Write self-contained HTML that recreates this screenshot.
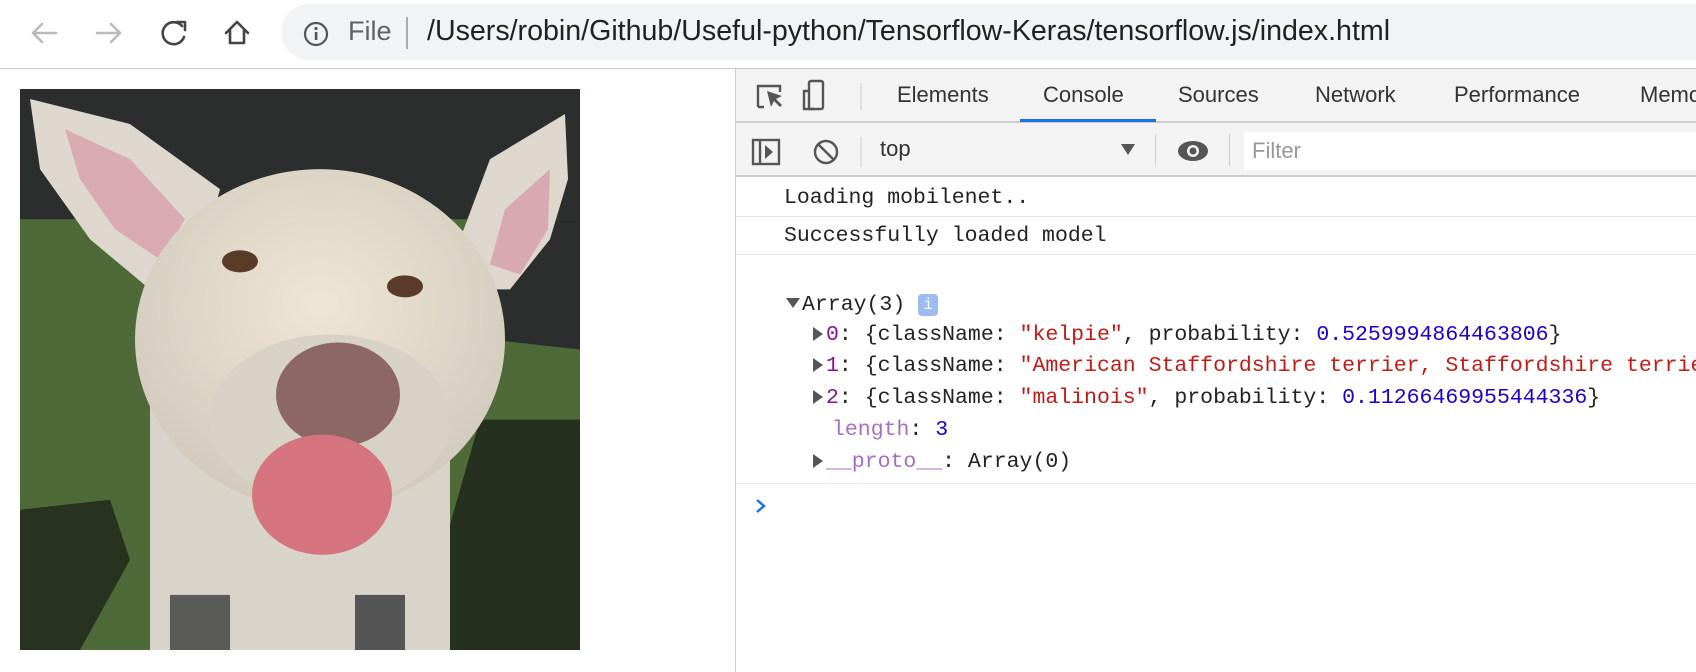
<!DOCTYPE html>
<html><head><meta charset="utf-8">
<style>
*{margin:0;padding:0;box-sizing:border-box}
html,body{width:1696px;height:672px;overflow:hidden}
body{background:#fff;font-family:"Liberation Sans",sans-serif;position:relative}
#wrap{position:absolute;left:0;top:0;width:1696px;height:672px;overflow:hidden}
.abs{position:absolute}
.tb{left:0;top:0;width:1696px;height:69px;background:#fff;border-bottom:1px solid #c8c8c8}
.pill{left:281px;top:4px;width:1415px;height:56px;border-radius:28px 0 0 28px;background:#f1f3f4}
.url{left:427px;top:15px;font-size:28.6px;color:#202124;white-space:nowrap}
.dt{left:735px;top:69px;width:961px;height:603px;border-left:1px solid #ccc;background:#fff}
.bar1{left:736px;top:69px;width:960px;height:54px;background:#f3f3f3;border-bottom:2px solid #ccc}
.bar2{left:736px;top:123px;width:960px;height:54px;background:#f3f3f3;border-bottom:2px solid #ccc}
.tab{top:82px;font-size:22px;color:#333}
.sep{width:1px;background:#ccc}
.mono{font-family:"Liberation Mono",monospace;font-size:21.5px;color:#222;white-space:nowrap;line-height:32px}
.k{color:#881391}.s{color:#c41a16}.n{color:#1c00cf}.l{color:#a86ec0}
.tri{display:inline-block;width:0;height:0;border-top:7px solid transparent;border-bottom:7px solid transparent;border-left:10px solid #555;margin-right:3px;vertical-align:-1px}
.hr{height:1px;background:#e6e6e6;left:736px;width:960px}
</style></head><body><div id="wrap">
<div class="abs tb"></div>
<svg class="abs" style="left:0;top:0" width="280" height="66">
<g fill="none" stroke-width="2.6" stroke-linecap="round" stroke-linejoin="round">
<path d="M33 33H56M33 33l9-9M33 33l9 9" stroke="#bbb"/>
<path d="M97 33H120M120 33l-9-9M120 33l-9 9" stroke="#bbb"/>
<path d="M182 26a11 11 0 1 0 2 11" stroke="#444"/>
<path d="M177 22h8v8" stroke="#444"/>
<path d="M226 33l11-11 11 11M230 30v13h14V30" stroke="#444"/>
</g></svg>
<div class="abs pill"></div>
<svg class="abs" style="left:302px;top:20px" width="28" height="28"><circle cx="14" cy="14" r="11" fill="none" stroke="#555" stroke-width="2.2"/><rect x="12.8" y="12" width="2.6" height="8" fill="#555"/><circle cx="14" cy="8.5" r="1.6" fill="#555"/></svg>
<div class="abs" style="left:348px;top:16px;font-size:27px;color:#5f6368">File</div>
<div class="abs" style="left:406px;top:17px;width:2px;height:32px;background:#aaa"></div>
<div class="abs url">/Users/robin/Github/Useful-python/Tensorflow-Keras/tensorflow.js/index.html</div>

<svg class="abs" style="left:20px;top:89px" width="560" height="561" viewBox="0 0 560 560" preserveAspectRatio="none">
<defs><radialGradient id="hg" cx="0.5" cy="0.4" r="0.6"><stop offset="0" stop-color="#eee5d5"/><stop offset="1" stop-color="#d2cbbd"/></radialGradient></defs>
<rect width="560" height="560" fill="#4d6a38"/>
<rect width="560" height="130" fill="#2b2e2c"/>
<path d="M0 130H560V260L470 250 460 130Z" fill="#2b2e2c"/>
<path d="M0 420 90 410 110 470 60 560H0Z" fill="#28331f"/>
<path d="M460 330 560 330 560 560 400 560 420 470Z" fill="#26301f"/>
<path d="M190 450 260 440 260 560 160 560Z" fill="#2a3322"/>
<path d="M10 10 110 35 200 100 180 180 130 200 70 150 20 80Z" fill="#ddd7cd"/>
<path d="M45 40 110 70 165 130 140 170 95 140 60 90Z" fill="#d9aab2"/>
<path d="M545 25 470 70 440 150 450 200 490 200 530 150 548 90Z" fill="#ddd7cd"/>
<path d="M530 80 485 120 470 175 500 185 528 140Z" fill="#d9a9b1"/>
<rect x="130" y="280" width="300" height="280" fill="#d8d4ca"/>
<rect x="150" y="505" width="60" height="55" fill="#5a5a58"/>
<rect x="335" y="505" width="50" height="55" fill="#555"/>
<ellipse cx="300" cy="250" rx="185" ry="170" fill="url(#hg)"/>
<ellipse cx="310" cy="330" rx="120" ry="85" fill="#d7d1c6"/>
<ellipse cx="220" cy="172" rx="18" ry="11" fill="#5a3b2a"/>
<ellipse cx="385" cy="197" rx="18" ry="11" fill="#5a3b2a"/>
<ellipse cx="318" cy="305" rx="62" ry="52" fill="#8c6763"/>
<ellipse cx="302" cy="405" rx="70" ry="60" fill="#d5747f"/>
</svg>

<div class="abs dt"></div>
<div class="abs bar1"></div>
<div class="abs bar2"></div>
<svg class="abs" style="left:736px;top:69px" width="140" height="108" fill="none" stroke="#555" stroke-width="2.4">
<path d="M22 38V17h22v6M22 38h6"/><path d="M31 22l4 16 3-6 6 6 2-2-6-6 6-3Z" fill="#555" stroke="none"/>
<rect x="73" y="12" width="14" height="28" rx="2"/><path d="M73 22h-5v18h10"/>
<line x1="125" y1="14" x2="125" y2="41" stroke="#ccc" stroke-width="1"/>
<rect x="17" y="71" width="26" height="24"/><line x1="24" y1="71" x2="24" y2="95"/><path d="M29 76l8 7-8 7Z" fill="#555" stroke="none"/>
<circle cx="90" cy="83" r="11"/><line x1="82" y1="75" x2="98" y2="91"/>
<line x1="125" y1="68" x2="125" y2="98" stroke="#ccc" stroke-width="1"/>
</svg>
<div class="abs tab" style="left:897px">Elements</div>
<div class="abs tab" style="left:1043px">Console</div>
<div class="abs tab" style="left:1178px">Sources</div>
<div class="abs tab" style="left:1315px">Network</div>
<div class="abs tab" style="left:1454px">Performance</div>
<div class="abs tab" style="left:1640px">Memory</div>
<div class="abs" style="left:1020px;top:119px;width:136px;height:3px;background:#1a73e8"></div>
<div class="abs" style="left:880px;top:136px;font-size:22px;color:#333">top</div>
<svg class="abs" style="left:1120px;top:142px" width="16" height="14"><path d="M1 2h14L8 13Z" fill="#555"/></svg>
<div class="abs sep" style="left:1155px;top:134px;height:32px"></div>
<svg class="abs" style="left:1176px;top:138px" width="34" height="26"><ellipse cx="17" cy="13" rx="15" ry="10" fill="#555"/><circle cx="17" cy="13" r="6" fill="#f3f3f3"/><circle cx="17" cy="13" r="3.5" fill="#555"/></svg>
<div class="abs sep" style="left:1229px;top:134px;height:32px"></div>
<div class="abs" style="left:1244px;top:132px;width:452px;height:38px;background:#fff"></div>
<div class="abs" style="left:1252px;top:138px;font-size:22px;color:#999">Filter</div>

<div class="abs mono" style="left:784px;top:182px">Loading mobilenet..</div>
<div class="abs hr" style="top:216px"></div>
<div class="abs mono" style="left:784px;top:220px">Successfully loaded model</div>
<div class="abs hr" style="top:254px"></div>
<div class="abs mono" style="left:786px;top:289px"><span class="tri" style="border-left:7px solid transparent;border-right:7px solid transparent;border-top:10px solid #555;border-bottom:0;vertical-align:2px;margin-right:2px"></span>Array(3) <span style="display:inline-block;width:20px;height:22px;background:#9cbcf0;border-radius:4px;color:#fff;font-size:16px;text-align:center;line-height:22px;vertical-align:1px">i</span></div>
<div class="abs mono" style="left:813px;top:319px"><span class="tri"></span><span class="k">0</span>: {className: <span class="s">"kelpie"</span>, probability: <span class="n">0.5259994864463806</span>}</div>
<div class="abs mono" style="left:813px;top:350px"><span class="tri"></span><span class="k">1</span>: {className: <span class="s">"American Staffordshire terrier, Staffordshire terrier"</span>}</div>
<div class="abs mono" style="left:813px;top:382px"><span class="tri"></span><span class="k">2</span>: {className: <span class="s">"malinois"</span>, probability: <span class="n">0.11266469955444336</span>}</div>
<div class="abs mono" style="left:832px;top:414px"><span class="l">length</span>: <span class="n">3</span></div>
<div class="abs mono" style="left:813px;top:446px"><span class="tri"></span><span class="l">__proto__</span>: Array(0)</div>
<div class="abs hr" style="top:483px"></div>
<svg class="abs" style="left:754px;top:498px" width="14" height="16"><path d="M3 2l7 6-7 6" fill="none" stroke="#1a73e8" stroke-width="2.4"/></svg>
</div></body></html>
